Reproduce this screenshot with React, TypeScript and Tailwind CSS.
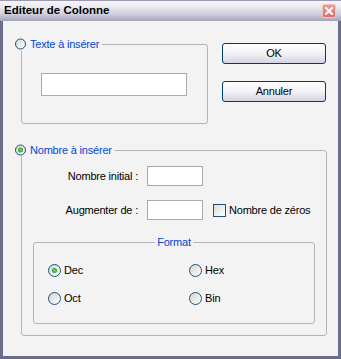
import type { ReactNode } from 'react';

const BG = 'bg-[#f3f3f3]';

function Radio({ checked = false, size = 'lg' }: { checked?: boolean; size?: 'sm' | 'lg' }) {
  return (
    <span
      className={
        (size === 'lg' ? 'h-[13px] w-[13px] ' : 'h-[11px] w-[11px] ') +
        'flex shrink-0 items-center justify-center rounded-full border border-[#1c5180] bg-gradient-to-br from-[#d4d4d0] to-white'
      }
    >
      {checked && (
        <span className="h-[5px] w-[5px] rounded-full bg-[radial-gradient(circle,#7be07b_0%,#21a121_70%)]" />
      )}
    </span>
  );
}

function GroupBox({
  className,
  legend,
  children,
}: {
  className: string;
  legend: ReactNode;
  children?: ReactNode;
}) {
  return (
    <div className={'relative rounded-[3px] border border-[#b4b4bc] ' + className}>
      {legend}
      {children}
    </div>
  );
}

function RadioLegend({ label, checked }: { label: string; checked?: boolean }) {
  return (
    <div
      className={
        'absolute left-[-7px] top-[-1px] flex -translate-y-1/2 items-center gap-[4px] pr-[3px] leading-[13px] text-[#0046d5] ' +
        BG
      }
    >
      <Radio size="sm" checked={checked} />
      <span>{label}</span>
    </div>
  );
}

function Button({ children }: { children: ReactNode }) {
  return (
    <button className="flex h-[21px] w-[104px] items-center justify-center rounded-[3px] border border-[#003c74] bg-gradient-to-b from-white via-[#f2f2f6] to-[#d4d4e4] leading-none text-black">
      {children}
    </button>
  );
}

function Option({ label, checked }: { label: string; checked?: boolean }) {
  return (
    <div className="flex h-[13px] items-center gap-[3px] leading-[13px]">
      <Radio checked={checked} />
      <span>{label}</span>
    </div>
  );
}

export default function App() {
  return (
    <div
      className="flex h-[359px] w-[341px] flex-col overflow-hidden text-[11px] tracking-[-0.2px] text-black"
      style={{ fontFamily: '"Liberation Sans", Arial, sans-serif' }}
    >
      {/* title bar */}
      <div className="flex h-[21px] shrink-0 items-center justify-between border-t border-[#9a9ab2] bg-[linear-gradient(to_bottom,#f6f6fa_0%,#ececf2_25%,#d0d0de_65%,#a2a2ba_100%)] pl-[4px] pr-[5px]">
        <span className="text-[11.5px] font-bold tracking-normal">Editeur de Colonne</span>
        <span className="flex h-[14px] w-[14px] items-center justify-center rounded-[2px] border border-[#f3c3c0] bg-gradient-to-b from-[#ee9a96] to-[#dc6e6a]">
          <svg width="8" height="8" viewBox="0 0 8 8">
            <path d="M1 1L7 7M7 1L1 7" stroke="white" strokeWidth="2" strokeLinecap="square" />
          </svg>
        </span>
      </div>

      {/* body */}
      <div className={'flex flex-1 flex-col border-x-[3px] border-b-[3px] border-[#6c6c8c] pl-[18px] pt-[22px] ' + BG}>
        <div className="flex items-start">
          <GroupBox className="mt-px h-[80px] w-[187px]" legend={<RadioLegend label="Texte à insérer" />}>
            <div className="ml-[19px] mt-[28px] h-[23px] w-[146px] border border-[#a8a8b0] bg-white" />
          </GroupBox>
          <div className="ml-[14px] flex flex-col gap-[17px]">
            <Button>OK</Button>
            <Button>Annuler</Button>
          </div>
        </div>

        <GroupBox
          className="mt-[26px] flex h-[186px] w-[306px] flex-col pt-[15px]"
          legend={<RadioLegend label="Nombre à insérer" checked />}
        >
          <div className="flex h-[20px] items-center">
            <span className="w-[116px] text-right">Nombre initial :</span>
            <div className="ml-[9px] h-[20px] w-[56px] border border-[#a8a8b0] bg-white" />
          </div>
          <div className="mt-[14px] flex h-[20px] items-center">
            <span className="w-[116px] text-right">Augmenter de :</span>
            <div className="ml-[9px] h-[20px] w-[56px] border border-[#a8a8b0] bg-white" />
            <span className="ml-[10px] h-[13px] w-[13px] border border-[#1c5180] bg-gradient-to-br from-[#dcdcd8] to-white" />
            <span className="ml-[3px]">Nombre de zéros</span>
          </div>

          <GroupBox
            className="mx-[11px] mt-[22px] h-[82px] pl-[14px] pt-[21px]"
            legend={
              <span
                className={
                  'absolute left-1/2 top-[-1px] -translate-x-1/2 -translate-y-1/2 px-[2px] leading-[13px] text-[#0046d5] ' +
                  BG
                }
              >
                Format
              </span>
            }
          >
            <div className="grid grid-cols-[141px_1fr] gap-y-[15px]">
              <Option label="Dec" checked />
              <Option label="Hex" />
              <Option label="Oct" />
              <Option label="Bin" />
            </div>
          </GroupBox>
        </GroupBox>
      </div>
    </div>
  );
}
